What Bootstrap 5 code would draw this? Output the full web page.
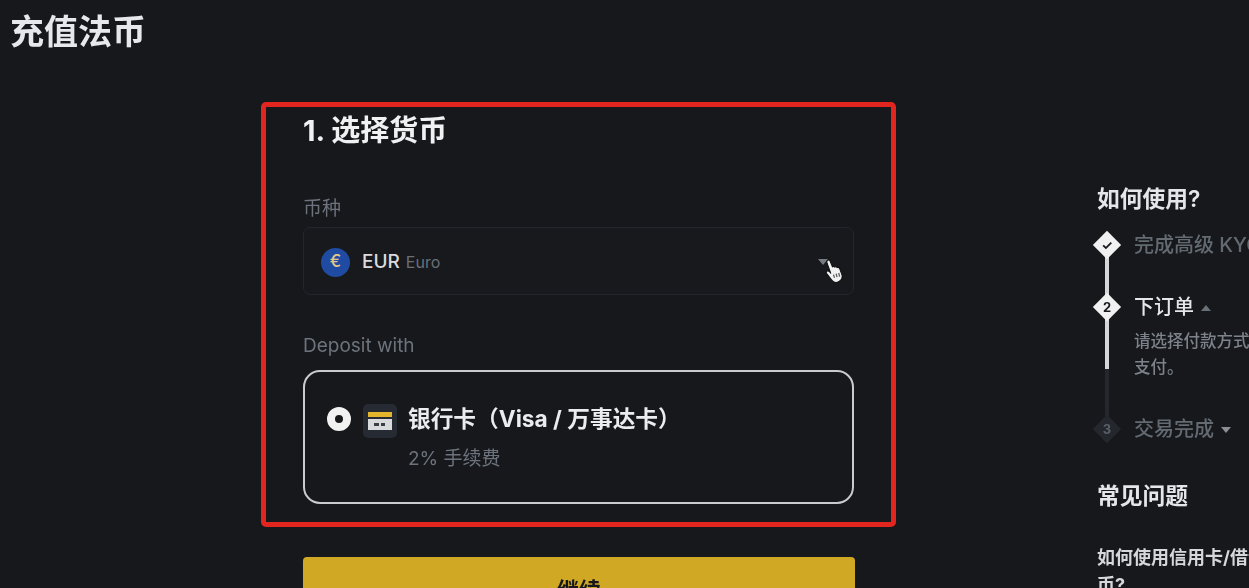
<!DOCTYPE html>
<html lang="zh-CN">
<head>
    <meta charset="UTF-8">
    <meta name="viewport" content="width=device-width, initial-scale=1.0">
    <title>充值法币</title>
    <link href="https://cdn.jsdelivr.net/npm/bootstrap@5.3.0/dist/css/bootstrap.min.css" rel="stylesheet">
    <style>
        html, body { height: 588px; overflow: hidden; }
        body {
            background-color: #16181c;
            color: #eaecef;
            font-family: "Inter", "Noto Sans CJK SC", sans-serif;
            filter: blur(0.45px);
        }
        .page-title { font-size: 34px; line-height: 44px; font-weight: 700; margin: 10px 0 0 10px; color: #e6e8eb; }
        .page-body { margin-top: 48px; }
        .left-col { width: 635px; margin-left: 261px; flex-shrink: 0; }
        .main-box {
            height: 425px;
            padding: 6px 37px 0 37px;
            border: 5px solid #e3251f;
            border-radius: 5px;
        }
        .step-title { font-size: 29px; line-height: 36px; font-weight: 700; margin: 0 0 47px; color: #f0f1f3; }
        .field-label { font-size: 19px; line-height: 26px; color: #6d737c; margin-bottom: 5px; }
        .coin-select {
            height: 68px;
            padding: 2px 17px 0;
            border: 1px solid #23262c;
            border-radius: 7px;
            background-color: #17191d;
            margin-bottom: 38px;
        }
        .coin-icon { width: 29px; height: 29px; border-radius: 50%; background-color: #1f4ba3; color: #e0c98a; font-size: 17px; font-weight: 500; }
        .coin-code { font-size: 19px; font-weight: 500; color: #d9dbdf; margin-left: 12px; }
        .coin-name { font-size: 16px; color: #6a7078; margin-left: 6px; }
        .select-caret { position: absolute; right: 25px; top: 31px; width: 0; height: 0; border-left: 5px solid transparent; border-right: 5px solid transparent; border-top: 6px solid #777b82; }
        .hand-cursor { position: absolute; right: 9px; top: 31px; }
        .pay-card {
            height: 134px;
            padding: 32px 22px 0;
            border: 2px solid #c9cbce;
            border-radius: 17px;
            margin-top: 11px;
        }
        .radio-dot { width: 24px; height: 24px; border-radius: 50%; border: 8px solid #f1f1f1; background-color: #16181c; margin-top: 3px; flex-shrink: 0; }
        .card-tile { width: 34px; height: 34px; border-radius: 5px; background-color: #262a33; margin: 0 11px 0 12px; flex-shrink: 0; }
        .pay-name { font-size: 22.7px; line-height: 30px; font-weight: 700; color: #eaecef; white-space: nowrap; }
        .pay-fee { font-size: 19px; line-height: 26px; color: #6d737c; margin-top: 12px; }
        .go-btn {
            display: block;
            width: 552px;
            height: 66px;
            margin: 30px 0 0 42px;
            padding: 0;
            background-color: #d1a824;
            color: #16181c;
            border: 0;
            border-radius: 4px;
            font-size: 22px;
            font-weight: 700;
            line-height: 30px;
        }
        .help-col { margin-left: 201px; width: 300px; flex-shrink: 0; padding-top: 82px; }
        .help-title { font-size: 22.75px; line-height: 30px; font-weight: 600; color: #e4e6e9; margin: 0; }
        .help-steps { margin-top: 17px; }
        .help-step { position: relative; padding-left: 37px; white-space: nowrap; }
        .step-first { padding-bottom: 34px; }
        .step-last { margin-top: 35px; }
        .step-mark {
            position: absolute;
            left: 0;
            top: 4px;
            width: 20px;
            height: 20px;
            background-color: #f1f1f1;
            color: #16181c;
            transform: rotate(45deg);
        }
        .step-mark span { display: block; transform: rotate(-45deg); text-align: center; font-size: 13px; line-height: 20px; font-weight: 700; }
        .step-mark.dim { background-color: #24272d; color: #5b6068; }
        .step-rail { position: absolute; left: 8px; width: 4px; background-color: #d5d6d8; }
        .step-rail.dim { background-color: #24272d; }
        .step-text { font-size: 20px; line-height: 28px; font-weight: 500; color: #646a72; }
        .step-text.on { color: #e4e6e9; }
        .step-desc { font-size: 16.5px; line-height: 26px; font-weight: 500; color: #7e838b; margin-top: 7px; }
        .arrow-up, .arrow-down { display: inline-block; width: 0; height: 0; border-left: 5px solid transparent; border-right: 5px solid transparent; margin-left: 2px; vertical-align: 3px; }
        .arrow-up { border-bottom: 6px solid #6a7078; }
        .arrow-down { border-top: 6px solid #8a8f96; }
        .faq-title { margin-top: 38px; }
        .faq-line { font-size: 18px; line-height: 27px; font-weight: 700; color: #d5d7da; margin-top: 33px; white-space: nowrap; }
    </style>
</head>
<body>

<h1 class="page-title">充值法币</h1>

<div class="page-body d-flex">
    <div class="left-col">
        <div class="main-box">
            <h2 class="step-title">1. 选择货币</h2>

            <div class="field-label">币种</div>
            <div class="coin-select d-flex align-items-center position-relative">
                <div class="coin-icon d-flex align-items-center justify-content-center">€</div>
                <span class="coin-code">EUR</span>
                <span class="coin-name">Euro</span>
                <span class="select-caret"></span>
                <svg class="hand-cursor" width="20" height="26" viewBox="0 0 19 25">
                    <path d="M3 1.5c1-1 2.300-.6 2.800.6L8 7.500c.8-.6 1.800-.5 2.300.3.800-.5 1.800-.3 2.300.5.900-.4 1.900 0 2.300.9l2.100 5.600c.9 2.600-.1 5.400-2.600 6.800-2.700 1.500-5.700.8-7.300-1.500L2.500 14c-.7-1-.4-2 .4-2.400.8-.4 1.700-.1 2.300.6L6.500 14 2.800 3.800c-.2-.9-.2-1.800.2-2.300z" fill="#f2f2f2" stroke="#111" stroke-width="1"/>
                    <path d="M9 15l1 3M11.500 14l1 3.500M14 13.500l1 3.500" stroke="#555" stroke-width="1.200" fill="none"/>
                </svg>
            </div>

            <div class="field-label">Deposit with</div>
            <div class="pay-card d-flex">
                <div class="radio-dot"></div>
                <div class="card-tile d-flex align-items-center justify-content-center">
                    <svg width="24" height="22" viewBox="0 0 24 22">
                        <rect x="0" y="2" width="24" height="5" fill="#e2b52b"/>
                        <rect x="0" y="7" width="24" height="2" fill="#262a33"/>
                        <rect x="0" y="9" width="24" height="11" fill="#d9dadc"/>
                        <rect x="6" y="13" width="5" height="3" fill="#3a3d44"/>
                        <rect x="13" y="13" width="4" height="3" fill="#3a3d44"/>
                    </svg>
                </div>
                <div>
                    <div class="pay-name">银行卡（Visa / 万事达卡）</div>
                    <div class="pay-fee">2% 手续费</div>
                </div>
            </div>
        </div>
        <button class="go-btn" type="button">继续</button>
    </div>

    <div class="help-col">
        <h3 class="help-title">如何使用?</h3>
        <div class="help-steps">
            <div class="help-step step-first">
                <div class="step-rail" style="top: 14px; height: 62px;"></div>
                <div class="step-mark"><span>✓</span></div>
                <div class="step-text">完成高级 KYC</div>
            </div>
            <div class="help-step">
                <div class="step-rail" style="top: 14px; height: 62px;"></div>
                <div class="step-rail dim" style="top: 76px; height: 60px;"></div>
                <div class="step-mark"><span>2</span></div>
                <div class="step-text on">下订单 <span class="arrow-up"></span></div>
                <div class="step-desc">请选择付款方式进行<br>支付。</div>
            </div>
            <div class="help-step step-last">
                <div class="step-mark dim"><span>3</span></div>
                <div class="step-text">交易完成 <span class="arrow-down"></span></div>
            </div>
        </div>
        <h3 class="help-title faq-title">常见问题</h3>
        <div class="faq-line">如何使用信用卡/借记卡购买加密货<br>币?</div>
    </div>
</div>

</body>
</html>
